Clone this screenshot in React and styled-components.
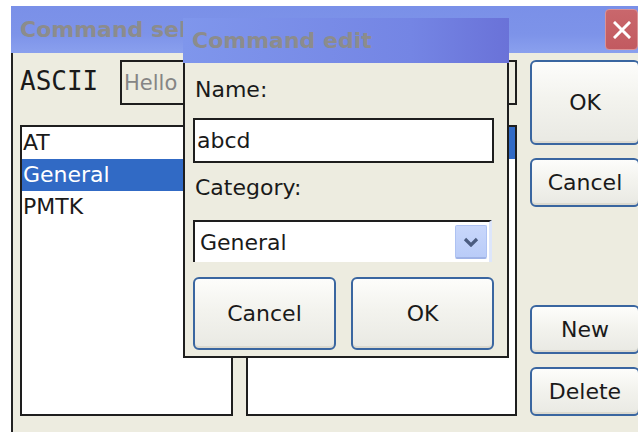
import React from "react";
import styled, { createGlobalStyle } from "styled-components";

const GlobalStyle = createGlobalStyle`
  html, body {
    margin: 0;
    padding: 0;
    background: #ffffff;
    overflow: hidden;
  }
  body {
    font-family: "DejaVu Sans", "Noto Sans", sans-serif;
    color: #1a1a1a;
  }
  * {
    box-sizing: border-box;
  }
`;

const Screen = styled.div`
  position: relative;
  width: 638px;
  height: 432px;
  overflow: hidden;
  padding: 6px 0 0 11px;
  background: #ffffff;
`;

const Window = styled.div`
  width: 632px;
  height: 450px;
  display: flex;
  flex-direction: column;
`;

const TitleBar = styled.div`
  flex: none;
  height: ${(p) => p.$height}px;
  display: flex;
  align-items: center;
  padding-left: 9px;
  background: ${(p) =>
    p.$front
      ? "linear-gradient(90deg, #7f96ec 0%, #7485e4 70%, #6a72d8 100%)"
      : "linear-gradient(180deg, #7a90e8 0%, #7d93e9 60%, #8aa0ee 100%)"};
  overflow: hidden;
  white-space: nowrap;
`;

// the parent window's caption is cut where the edit dialog sits on top of it
const Title = styled.span`
  font-size: 22px;
  font-weight: bold;
  color: #8c8c8c;
  max-width: ${(p) => (p.$clip ? `${p.$clip}px` : "none")};
  overflow: hidden;
`;

const CloseButton = styled.div`
  margin-left: auto;
  margin-right: 5px;
  width: 33px;
  height: 41px;
  border-radius: 4px;
  background: linear-gradient(180deg, #c9676c 0%, #c25a60 100%);
  border: 1px solid #d99296;
  display: flex;
  align-items: center;
  justify-content: center;
`;

const WindowBody = styled.div`
  flex: 1;
  display: grid;
  grid-template-columns: 497px 110px;
  column-gap: 13px;
  align-content: start;
  padding: 7px 0 0 7px;
  border-left: 2px solid #222222;
  background: #edece0;
`;

const MainColumn = styled.div`
  display: flex;
  flex-direction: column;
`;

const CommandRow = styled.div`
  height: 45px;
  display: flex;
  align-items: center;
`;

const ModeLabel = styled.span`
  width: 100px;
  font-family: "DejaVu Sans Mono", monospace;
  font-size: 26px;
  padding-bottom: 3px;
`;

const Field = styled.div`
  height: ${(p) => p.$height}px;
  flex: ${(p) => (p.$grow ? 1 : "none")};
  display: flex;
  align-items: center;
  padding-left: ${(p) => p.$pad || 2}px;
  border: 2px solid #1e1e1e;
  background: ${(p) => (p.$readonly ? "#edece0" : "#ffffff")};
  color: ${(p) => (p.$readonly ? "#858585" : "#1a1a1a")};
  font-size: ${(p) => p.$size || 22}px;
  white-space: nowrap;
  overflow: hidden;
`;

const ListRow = styled.div`
  margin-top: 20px;
  height: 291px;
  display: flex;
  gap: 13px;
`;

const ListBox = styled.div`
  width: ${(p) => (p.$width ? `${p.$width}px` : "auto")};
  flex: ${(p) => (p.$width ? "none" : 1)};
  border: 2px solid #1e1e1e;
  background: #ffffff;
  overflow: hidden;
`;

const ListItem = styled.div`
  height: 32px;
  line-height: 32px;
  font-size: 22px;
  padding-left: 1px;
  white-space: nowrap;
  background: ${(p) => (p.$selected ? "#316ac5" : "transparent")};
  color: ${(p) => (p.$selected ? "#ffffff" : "#1a1a1a")};
`;

const ButtonColumn = styled.div`
  height: 356px;
  display: flex;
  flex-direction: column;
`;

const Button = styled.div`
  height: ${(p) => p.$height || 49}px;
  margin-top: ${(p) => (p.$push ? "auto" : `${p.$gap || 0}px`)};
  display: flex;
  align-items: center;
  justify-content: center;
  border: 2px solid #3a66a0;
  border-radius: 6px;
  background: linear-gradient(180deg, #fdfdfb 0%, #f3f3ee 45%, #e9e9e3 100%);
  box-shadow: inset 0 -2px 0 #dcdad0;
  font-size: 22px;
  color: #1a1a1a;
`;

const Dialog = styled.div`
  position: absolute;
  left: 183px;
  top: 18px;
  width: 326px;
  display: flex;
  flex-direction: column;
`;

const DialogBody = styled.div`
  display: flex;
  flex-direction: column;
  padding: 0 13px 6px 8px;
  border: 2px solid #1e1e1e;
  border-top: none;
  background: #edece0;
`;

const FieldLabel = styled.div`
  margin-top: ${(p) => p.$top}px;
  margin-bottom: ${(p) => p.$bottom}px;
  padding-left: 2px;
  height: 26px;
  line-height: 26px;
  font-size: 22px;
`;

const Combo = styled.div`
  height: 42px;
  display: flex;
  align-items: center;
  padding-left: 5px;
  border-top: 2px solid #1e1e1e;
  border-left: 2px solid #1e1e1e;
  border-right: 3px solid #dde6fb;
  background: #ffffff;
  font-size: 22px;
  width: 299px;
`;

const ComboValue = styled.span`
  flex: 1;
`;

const DropButton = styled.div`
  width: 32px;
  height: 34px;
  margin-right: 2px;
  display: flex;
  align-items: center;
  justify-content: center;
  background: linear-gradient(180deg, #c9d7fb 0%, #b9ccf8 100%);
  border: 1px solid #aec2f2;
  border-bottom: 2px solid #9fb3e6;
  border-radius: 2px;
`;

const DialogButtons = styled.div`
  margin-top: 15px;
  display: grid;
  grid-template-columns: 143px 143px;
  column-gap: 15px;
`;

function CloseGlyph() {
  return (
    <svg width="18" height="18" viewBox="0 0 18 18">
      <path d="M2 2 L16 16 M16 2 L2 16" stroke="#ffffff" strokeWidth="3" strokeLinecap="square" />
    </svg>
  );
}

function Chevron() {
  return (
    <svg width="16" height="10" viewBox="0 0 16 10">
      <path d="M2 2 L8 8 L14 2" fill="none" stroke="#4b5c80" strokeWidth="3.2" />
    </svg>
  );
}

const categories = ["AT", "General", "PMTK"];
const commands = ["Hello"];

export default function App() {
  return (
    <>
      <GlobalStyle />
      <Screen>
        <Window>
          <TitleBar $height={47}>
            <Title $clip={163}>Command select</Title>
            <CloseButton>
              <CloseGlyph />
            </CloseButton>
          </TitleBar>
          <WindowBody>
            <MainColumn>
              <CommandRow>
                <ModeLabel>ASCII</ModeLabel>
                <Field $height={45} $grow $readonly $size={21}>
                  Hello
                </Field>
              </CommandRow>
              <ListRow>
                <ListBox $width={213}>
                  {categories.map((c) => (
                    <ListItem key={c} $selected={c === "General"}>
                      {c}
                    </ListItem>
                  ))}
                </ListBox>
                <ListBox>
                  {commands.map((c, i) => (
                    <ListItem key={c} $selected={i === 0}>
                      {c}
                    </ListItem>
                  ))}
                </ListBox>
              </ListRow>
            </MainColumn>
            <ButtonColumn>
              <Button $height={85}>OK</Button>
              <Button $gap={13}>Cancel</Button>
              <Button $push>New</Button>
              <Button $gap={13}>Delete</Button>
            </ButtonColumn>
          </WindowBody>
        </Window>

        <Dialog>
          <TitleBar $height={45} $front>
            <Title>Command edit</Title>
          </TitleBar>
          <DialogBody>
            <FieldLabel $top={14} $bottom={15}>Name:</FieldLabel>
            <Field $height={45}>abcd</Field>
            <FieldLabel $top={12} $bottom={19}>Category:</FieldLabel>
            <Combo>
              <ComboValue>General</ComboValue>
              <DropButton>
                <Chevron />
              </DropButton>
            </Combo>
            <DialogButtons>
              <Button $height={73}>Cancel</Button>
              <Button $height={73}>OK</Button>
            </DialogButtons>
          </DialogBody>
        </Dialog>
      </Screen>
    </>
  );
}
